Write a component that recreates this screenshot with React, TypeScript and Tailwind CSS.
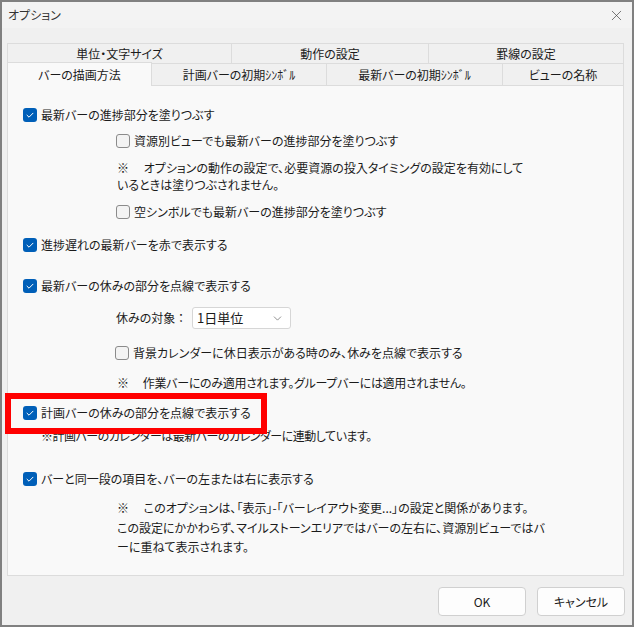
import React from 'react';
import { ChevronDown, X } from 'lucide-react';

const font = "font-['Noto_Sans_CJK_JP','Noto_Sans',sans-serif]";

const Check: React.FC<{ on?: boolean }> = ({ on }) =>
  on ? (
    <span className="flex h-[14px] w-[14px] shrink-0 items-center justify-center rounded-[3px] bg-[#005fb8]">
      <svg viewBox="0 0 14 14" width="14" height="14">
        <polyline points="4,7.2 6,9.2 10,5.2" fill="none" stroke="#ffffff" strokeWidth="1" strokeLinecap="round" strokeLinejoin="round" />
      </svg>
    </span>
  ) : (
    <span className="h-[14px] w-[14px] shrink-0 rounded-[3px] border border-[#8b8b8b] bg-[#f3f3f3]" />
  );

const Row: React.FC<{ on?: boolean; label: string; className?: string }> = ({ on, label, className }) => (
  <div className={`flex h-[20px] items-center gap-[4px] whitespace-nowrap ${className ?? ''}`}>
    <Check on={on} />
    <span>{label}</span>
  </div>
);

const topTabs = ['単位・文字サイズ', '動作の設定', '罫線の設定'];
const bottomTabs = ['バーの描画方法', '計画バーの初期ｼﾝﾎﾞﾙ', '最新バーの初期ｼﾝﾎﾞﾙ', 'ビューの名称'];

export default function App() {
  return (
    <div className={`relative flex h-[627px] w-[634px] flex-col border-2 border-[#808080] bg-[#f0f0f0] text-[12px] text-[#1b1b1b] ${font} [font-feature-settings:'palt']`}>
      {/* title bar */}
      <div className="flex h-[26px] items-center justify-between bg-[#f3f3f3] pl-[6px] pr-[7px]">
        <span className="text-[12px] text-[#333]">オプション</span>
        <X size={17} strokeWidth={1} className="text-[#444]" />
      </div>

      <div className="flex flex-1 flex-col px-[5px] pt-[15px]">
        {/* tab rows */}
        <div className="grid h-[20px] grid-cols-[224px_197px_196px] text-center">
          {topTabs.map((t) => (
            <div key={t} className="flex items-center justify-center border-l border-t border-[#dcdcdc] bg-[#f0f0f0] last:border-r">
              {t}
            </div>
          ))}
        </div>
        <div className="grid h-[22px] grid-cols-[145px_175px_176px_121px] text-center">
          {bottomTabs.map((t, i) => (
            <div
              key={t}
              className={
                i === 0
                  ? 'relative z-10 -mt-px flex h-[24px] items-center justify-center border-l border-r border-t border-[#dcdcdc] bg-[#f9f9f9]'
                  : 'flex items-center justify-center border-r border-t border-[#dcdcdc] bg-[#f0f0f0]'
              }
            >
              {t}
            </div>
          ))}
        </div>

        {/* panel */}
        <div className="flex h-[491px] w-[617px] flex-col border border-[#dcdcdc] bg-[#f9f9f9] pl-[15px]">
          <Row on label="最新バーの進捗部分を塗りつぶす" className="mt-[19px]" />
          <Row label="資源別ビューでも最新バーの進捗部分を塗りつぶす" className="ml-[93px] mt-[6px]" />
          <div className="ml-[94px] mt-[8px] whitespace-nowrap leading-[17px]">
            <div>※　 オプションの動作の設定で、必要資源の投入タイミングの設定を有効にして</div>
            <div>いるときは塗りつぶされません。</div>
          </div>
          <Row label="空シンボルでも最新バーの進捗部分を塗りつぶす" className="ml-[93px] mt-[9px]" />
          <Row on label="進捗遅れの最新バーを赤で表示する" className="mt-[13px]" />
          <Row on label="最新バーの休みの部分を点線で表示する" className="mt-[21px]" />

          <div className="ml-[93px] mt-[11px] flex h-[22px] items-center gap-[8px]">
            <span>休みの対象&nbsp;：</span>
            <div className="flex h-[22px] w-[99px] items-center justify-between rounded-[3px] border border-[#d6d6d6] bg-white pl-[4px] pr-[6px]">
              <span className="text-[13px]">1日単位</span>
              <ChevronDown size={13} strokeWidth={1.2} className="text-[#555]" />
            </div>
          </div>

          <Row label="背景カレンダーに休日表示がある時のみ、休みを点線で表示する" className="ml-[92px] mt-[14px]" />
          <div className="ml-[94px] mt-[10px] flex h-[20px] items-center whitespace-nowrap tracking-[-0.3px]">※　 作業バーにのみ適用されます。グループバーには適用されません。</div>
          <Row on label="計画バーの休みの部分を点線で表示する" className="mt-[10px]" />
          <div className="ml-[18px] mt-[3px] flex h-[20px] items-center whitespace-nowrap tracking-[-0.5px]">※計画バーのカレンダーは最新バーのカレンダーに連動しています。</div>
          <Row on label="バーと同一段の項目を、バーの左または右に表示する" className="mt-[23px]" />
          <div className="ml-[94px] mt-[9px] whitespace-nowrap leading-[19.5px]">
            <div>※　 このオプションは、「表示」-「バーレイアウト変更...」の設定と関係があります。</div>
            <div>この設定にかかわらず、マイルストーンエリアではバーの左右に、資源別ビューではバ</div>
            <div>ーに重ねて表示されます。</div>
          </div>
        </div>

        {/* buttons */}
        <div className="mt-[11px] flex justify-end gap-[11px] pr-[2px]">
          <button className="h-[29px] w-[88px] rounded-[4px] border border-[#d0d0d0] bg-[#fdfdfd] text-[12px] text-[#1b1b1b]">OK</button>
          <button className="h-[29px] w-[88px] rounded-[4px] border border-[#d0d0d0] bg-[#fdfdfd] text-[12px] text-[#1b1b1b]">キャンセル</button>
        </div>
      </div>

      {/* highlight frame */}
      <div className="pointer-events-none absolute left-[3px] top-[391px] h-[41px] w-[262px] border-[6px] border-[#ff0000]" />
    </div>
  );
}
